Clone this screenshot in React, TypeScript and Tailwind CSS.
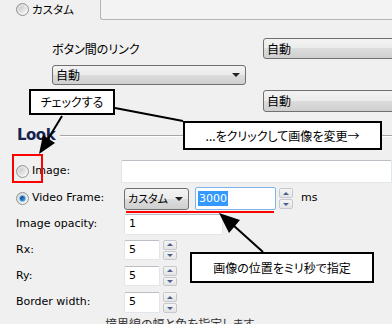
import React from "react";

const jp = "font-['Noto_Sans_CJK_JP',sans-serif] [font-feature-settings:'palt']";

function Radio({ checked = false }: { checked?: boolean }) {
  return (
    <div className="w-[13px] h-[13px] rounded-full border border-[#8f9294] bg-gradient-to-br from-[#d6d6d6] to-[#fbfbfb] flex items-center justify-center shrink-0">
      {checked ? (
        <div className="w-[7px] h-[7px] rounded-full bg-gradient-to-br from-[#0b3a7a] to-[#3fa1e8] border border-[#6fb5ea]" />
      ) : (
        <div className="w-[7px] h-[7px] rounded-full bg-gradient-to-br from-[#c9c9c9] to-[#f2f2f2]" />
      )}
    </div>
  );
}

function Select({ text, cls, arrow = true, size = "text-[12px]" }: { text: string; cls: string; arrow?: boolean; size?: string }) {
  return (
    <div className={`relative flex items-center rounded-[3px] border border-[#707070] bg-[linear-gradient(#f3f3f3_0%,#ebebeb_49%,#dddddd_50%,#cfcfcf_100%)] pl-[3px] ${cls}`}>
      <span className={`${jp} ${size} leading-none`}>{text}</span>
      {arrow && (
        <div className="ml-auto mr-[5px] w-0 h-0 border-l-[4px] border-r-[4px] border-t-[4px] border-l-transparent border-r-transparent border-t-[#222]" />
      )}
    </div>
  );
}

function Spin({ cls }: { cls: string }) {
  return (
    <div className={`flex flex-col gap-[1px] w-[14px] ${cls}`}>
      <div className="flex-1 flex items-center justify-center border border-[#c5c9cf] rounded-[2px] bg-gradient-to-b from-[#f5f5f5] to-[#e4e4e4]">
        <div className="w-0 h-0 border-l-[3px] border-r-[3px] border-b-[3px] border-l-transparent border-r-transparent border-b-[#4a5f8c]" />
      </div>
      <div className="flex-1 flex items-center justify-center border border-[#c5c9cf] rounded-[2px] bg-gradient-to-b from-[#f5f5f5] to-[#e4e4e4]">
        <div className="w-0 h-0 border-l-[3px] border-r-[3px] border-t-[3px] border-l-transparent border-r-transparent border-t-[#4a5f8c]" />
      </div>
    </div>
  );
}

function Field({ value, cls }: { value: string; cls: string }) {
  return (
    <div className={`flex items-center bg-white border border-[#e2e6eb] border-t-[#b9bec5] rounded-[2px] pl-[4px] ${cls}`}>
      <span>{value}</span>
    </div>
  );
}

export default function App() {
  return (
    <div className="relative w-[392px] h-[324px] overflow-hidden bg-[#f0f0f0] font-['DejaVu_Sans','Noto_Sans_CJK_JP',sans-serif] text-[11px] text-black">
      {/* Top row */}
      <div className="flex h-[20px]">
        <div className="flex items-center w-[100px] h-[19px] pl-[16px] gap-[3px]">
          <Radio />
          <span className={`${jp} text-[11.5px] leading-none`}>カスタム</span>
        </div>
        <div className="flex-1 h-[20px] border-l border-b border-[#b4b4b4] rounded-bl-[3px] bg-[#f3f3f3]" />
      </div>

      {/* link settings */}
      <div className="flex h-[100px]">
        <div className="ml-[52px] w-[194px] flex flex-col">
          <div className={`${jp} mt-[22px] h-[14px] text-[12px] leading-[14px]`}>ボタン間のリンク</div>
          <Select text="自動" cls="mt-[9px] h-[20px] w-[194px]" />
        </div>
        <div className="ml-[17px] flex flex-col">
          <Select text="自動" cls="mt-[18px] h-[21px] w-[170px]" arrow={false} />
          <Select text="自動" cls="mt-[31px] h-[22px] w-[170px]" arrow={false} />
        </div>
      </div>

      {/* Look header */}
      <div className="flex items-center h-[30px] pl-[17px]">
        <span className="font-['DejaVu_Sans',sans-serif] font-bold text-[15px] leading-none text-[#14234f] tracking-[-0.5px] pt-[1px]">Look</span>
        <div className="flex-1 ml-[5px] h-px bg-[#a5a5a5] shadow-[0_1px_0_#ffffff]" />
      </div>

      {/* form */}
      <div className="flex flex-col">
        <div className="flex items-center h-[23px] mt-[10px]">
          <div className="w-[124px] pl-[16px] flex items-center gap-[3px]">
            <Radio />
            <span>Image:</span>
          </div>
          <Field value="" cls="h-[23px] w-[280px]" />
        </div>

        <div className="flex items-center h-[23px] mt-[4px]">
          <div className="w-[124px] pl-[16px] flex items-center gap-[3px]">
            <Radio checked />
            <span>Video Frame:</span>
          </div>
          <Select text="カスタム" cls="h-[22px] w-[65px]" size="text-[11px]" />
          <div className="ml-[6px] w-[81px] h-[23px] flex items-center bg-white border border-[#7eb4ea] rounded-[2px] pl-[2px]">
            <span className="bg-[#3399ff] text-white px-[1px] leading-[15px]">3000</span>
          </div>
          <Spin cls="ml-[3px] h-[21px]" />
          <span className="ml-[8px]">ms</span>
        </div>

        <div className="flex items-center h-[21px] mt-[4px]">
          <div className="w-[124px] pl-[16px]">Image opacity:</div>
          <Field value="1" cls="h-[21px] w-[99px]" />
        </div>

        <div className="flex items-center h-[20px] mt-[5px]">
          <div className="w-[124px] pl-[16px]">Rx:</div>
          <Field value="5" cls="h-[20px] w-[36px]" />
          <Spin cls="ml-[3px] h-[20px]" />
        </div>

        <div className="flex items-center h-[20px] mt-[6px]">
          <div className="w-[124px] pl-[16px]">Ry:</div>
          <Field value="5" cls="h-[20px] w-[36px]" />
          <Spin cls="ml-[3px] h-[20px]" />
        </div>

        <div className="flex items-center h-[21px] mt-[6px]">
          <div className="w-[124px] pl-[16px]">Border width:</div>
          <Field value="5" cls="h-[21px] w-[36px]" />
          <Spin cls="ml-[3px] h-[21px]" />
        </div>

        <div className={`${jp} mt-[4px] pl-[105px] text-[12px] leading-[14px] text-[#333]`}>境界線の幅と色を指定します</div>
      </div>

      {/* annotations */}
      <svg className="absolute inset-0 pointer-events-none" width="392" height="324" viewBox="0 0 392 324">
        <line x1="115" y1="108" x2="183" y2="121" stroke="#000" strokeWidth="2" />
        <line x1="62" y1="116" x2="48" y2="139" stroke="#000" strokeWidth="2" />
        <polygon points="39,154 55,143 43,135" fill="#000" />
        <line x1="263" y1="252" x2="233" y2="225" stroke="#000" strokeWidth="2" />
        <polygon points="219,213 240,220 229,233" fill="#000" />
      </svg>

      <div className={`${jp} absolute left-[29px] top-[89px] w-[86px] h-[26px] border-2 border-black bg-white flex items-center justify-center text-[12px]`}>
        チェックする
      </div>
      <div className={`${jp} absolute left-[183px] top-[121px] w-[199px] h-[29px] border-2 border-black bg-white flex items-center justify-center text-[12px]`}>
        ...をクリックして画像を変更→
      </div>
      <div className={`${jp} absolute left-[190px] top-[252px] w-[184px] h-[31px] border-2 border-black bg-white flex items-center justify-center text-[12px]`}>
        画像の位置をミリ秒で指定
      </div>
      <div className="absolute left-[12px] top-[154px] w-[31px] h-[29px] border-2 border-[#ff0000]" />
      <div className="absolute left-[126px] top-[211px] w-[148px] h-[2px] bg-[#ff0000]" />
    </div>
  );
}
